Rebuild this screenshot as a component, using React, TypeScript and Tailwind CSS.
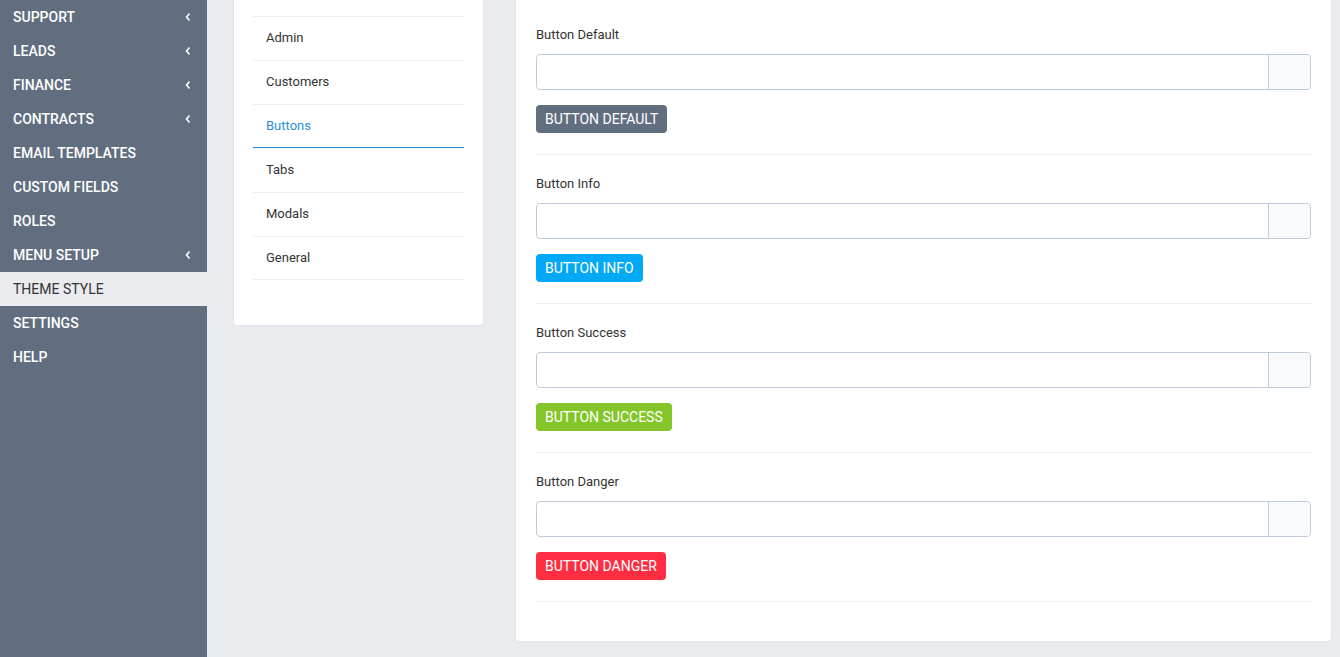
import React from "react";

const menu = [
  { label: "SUPPORT", chev: true },
  { label: "LEADS", chev: true },
  { label: "FINANCE", chev: true },
  { label: "CONTRACTS", chev: true },
  { label: "EMAIL TEMPLATES" },
  { label: "CUSTOM FIELDS" },
  { label: "ROLES" },
  { label: "MENU SETUP", chev: true },
  { label: "THEME STYLE", active: true },
  { label: "SETTINGS" },
  { label: "HELP" },
];

const tabs = ["Admin", "Customers", "Buttons", "Tabs", "Modals", "General"];

const sections = [
  { label: "Button Default", btn: "BUTTON DEFAULT", cls: "bg-[#616e80]" },
  { label: "Button Info", btn: "BUTTON INFO", cls: "bg-[#03a9f4]" },
  { label: "Button Success", btn: "BUTTON SUCCESS", cls: "bg-[#84c529]" },
  { label: "Button Danger", btn: "BUTTON DANGER", cls: "bg-[#ff2d42]" },
];

function Chevron() {
  return (
    <svg width="8" height="10" viewBox="0 0 8 10" className="mr-[15px]">
      <path d="M5.5 1.5 L2.5 5 L5.5 8.5" stroke="white" strokeWidth="1.6" fill="none" />
    </svg>
  );
}

export default function App() {
  return (
    <div
      className="flex h-[657px] w-[1340px] overflow-hidden bg-[#e9ebef] text-[#333]"
      style={{ fontFamily: "Roboto, 'Liberation Sans', sans-serif" }}
    >
      <aside className="w-[207px] shrink-0 bg-[#616e80]">
        {menu.map((m) => (
          <div
            key={m.label}
            className={
              "flex h-[34px] items-center justify-between pl-[13px] text-[14px] " +
              (m.active ? "bg-[#e9ebef] text-[#333] font-normal" : "text-white font-medium")
            }
          >
            <span>{m.label}</span>
            {m.chev && <Chevron />}
          </div>
        ))}
      </aside>

      <div className="ml-[26px] mt-[-10px] w-[251px] shrink-0 self-start rounded-[4px] border border-[#e1e4ea] bg-white px-[19px] pt-[25px] pb-[45px]">
        {tabs.map((t, i) => (
          <div
            key={t}
            className={
              "flex h-[44px] items-center border-t pl-[13px] pb-[1px] text-[13px] " +
              (t === "Buttons"
                ? "border-[#edeff2] border-b border-b-[#2a91d6] text-[#2a91d6]"
                : "border-[#edeff2] text-[#333]") +
              (i === tabs.length - 1 ? " border-b border-b-[#edeff2]" : "")
            }
          >
            {t}
          </div>
        ))}
      </div>

      <div className="ml-[31px] mt-[-10px] mr-[8px] h-[652px] flex-1 self-start rounded-[4px] border border-[#e1e4ea] bg-white px-[20px] pt-[34px]">
        {sections.map((s) => (
          <div key={s.label} className="border-b border-[#edeff2] pb-[21px] mb-[19px]">
            <div className="h-[20px] text-[13px] leading-[20px]">{s.label}</div>
            <div className="mt-[9px] flex h-[36px] rounded-[4px] border border-[#bfcbd9]">
              <div className="flex-1" />
              <div className="w-[42px] rounded-r-[4px] border-l border-[#bfcbd9] bg-[#f9fafc]" />
            </div>
            <div className="mt-[15px]">
              <span
                className={
                  "inline-flex h-[28px] items-center rounded-[4px] px-[9px] text-[14px] font-normal text-white " +
                  s.cls
                }
              >
                {s.btn}
              </span>
            </div>
          </div>
        ))}
      </div>
    </div>
  );
}
